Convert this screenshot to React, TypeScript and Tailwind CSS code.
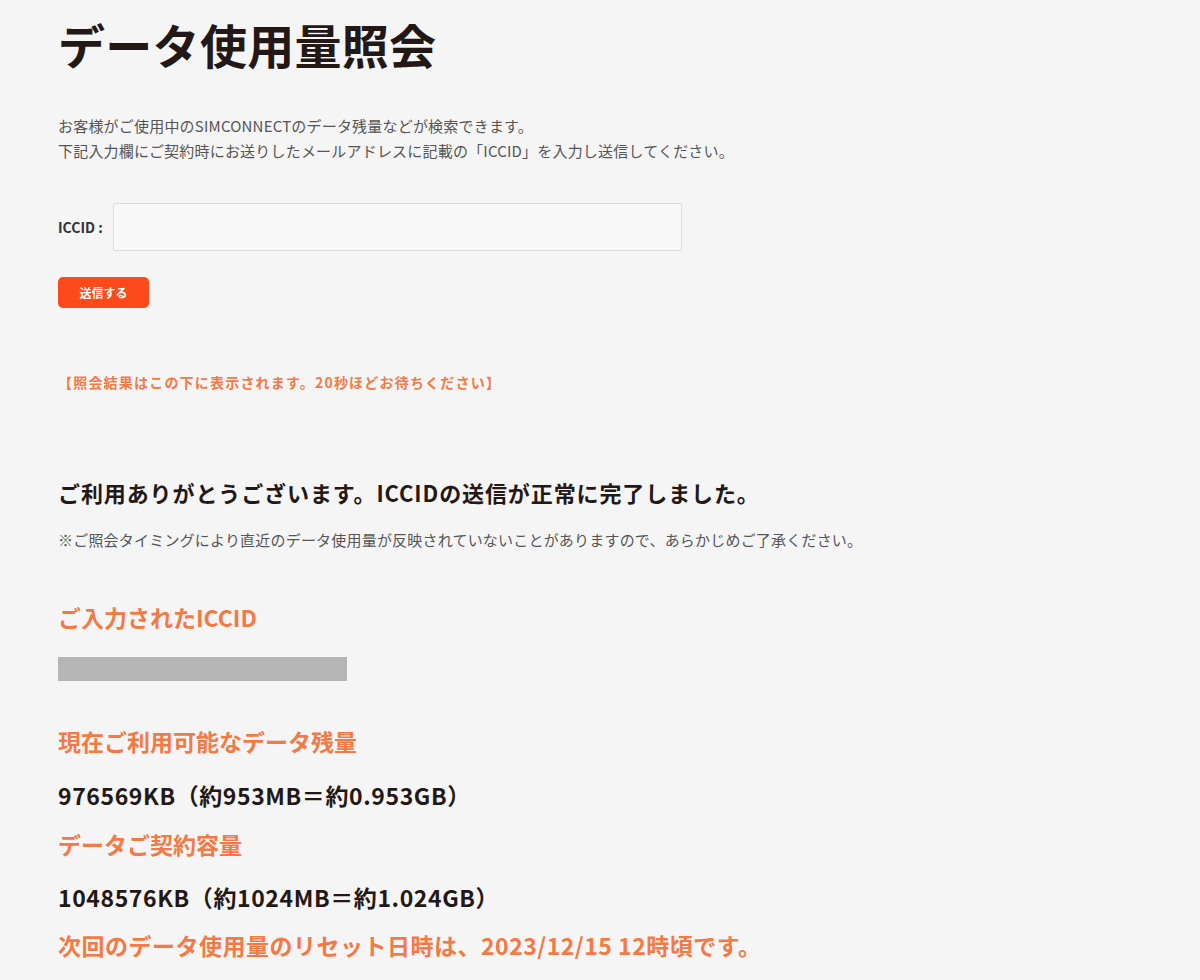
export default function App() {
  return (
    <div
      className="min-h-[980px] bg-[#f5f5f5] text-[#231815]"
      style={{ fontFamily: '"Noto Sans CJK JP", "Noto Sans", sans-serif' }}
    >
      <div className="px-[58px] pt-[12px] pb-10">
        <h1 className="text-[47px] font-bold leading-[64px] tracking-[0.3px]">データ使用量照会</h1>

        <div className="mt-[37px] text-[15px] leading-[25px] tracking-[0.2px] text-[#555]">
          <p>お客様がご使用中のSIMCONNECTのデータ残量などが検索できます。</p>
          <p>下記入力欄にご契約時にお送りしたメールアドレスに記載の「ICCID」を入力し送信してください。</p>
        </div>

        <div className="mt-[40px] flex items-center">
          <label className="w-[55px] text-[14px] font-bold text-[#333]">ICCID :</label>
          <input
            type="text"
            className="h-[48px] w-[569px] rounded-[2px] border border-[#dcdcdc] bg-[#f9f9f9] px-3 outline-none"
          />
        </div>

        <button className="mt-[26px] h-[31px] w-[91px] rounded-[5px] bg-[#fc4a1a] text-[12px] font-bold text-white">
          送信する
        </button>

        <p className="mt-[64px] text-[14px] font-bold tracking-[1.2px] text-[#f47a45]">
          【照会結果はこの下に表示されます。20秒ほどお待ちください】
        </p>

        <h2 className="mt-[84px] text-[22px] font-bold leading-[30px] tracking-[0.9px]">
          ご利用ありがとうございます。ICCIDの送信が正常に完了しました。
        </h2>
        <p className="mt-[22px] text-[15px] tracking-[0.2px] text-[#555]">
          ※ご照会タイミングにより直近のデータ使用量が反映されていないことがありますので、あらかじめご了承ください。
        </p>

        <h3 className="mt-[50px] text-[23px] font-bold leading-[30px] text-[#f47a45]">ご入力されたICCID</h3>
        <div className="mt-[25px] h-[24px] w-[289px] bg-[#b5b5b5]" />

        <h3 className="mt-[45px] text-[23px] font-bold leading-[30px] text-[#f47a45]">現在ご利用可能なデータ残量</h3>
        <p className="mt-[24px] text-[23px] font-bold leading-[30px] tracking-[0.6px]">976569KB（約953MB＝約0.953GB）</p>
        <h3 className="mt-[19px] text-[23px] font-bold leading-[30px] text-[#f47a45]">データご契約容量</h3>
        <p className="mt-[23px] text-[23px] font-bold leading-[30px] tracking-[0.6px]">1048576KB（約1024MB＝約1.024GB）</p>
        <h3 className="mt-[18px] text-[23px] font-bold leading-[30px] tracking-[0.5px] text-[#f47a45]">
          次回のデータ使用量のリセット日時は、2023/12/15 12時頃です。
        </h3>
      </div>
    </div>
  );
}
